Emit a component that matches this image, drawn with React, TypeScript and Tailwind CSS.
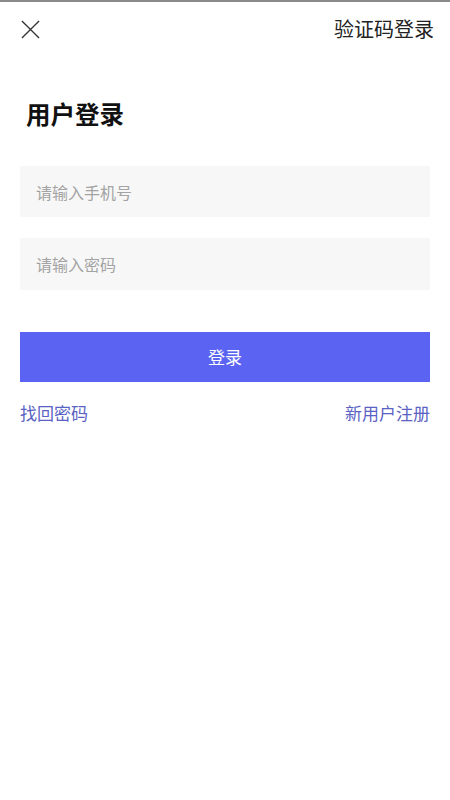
import { useState } from "react";

const font = { fontFamily: '"Noto Sans CJK SC", "Noto Sans", sans-serif' };

function CloseIcon() {
  return (
    <svg viewBox="0 0 20 20" className="h-[19px] w-[19px]" fill="none" stroke="#333" strokeWidth={1.4}>
      <path d="M1 1 L19 19 M19 1 L1 19" />
    </svg>
  );
}

export default function App() {
  const [phone, setPhone] = useState("");
  const [pwd, setPwd] = useState("");

  return (
    <div className="min-h-[800px] w-[450px] bg-white" style={font}>
      <div className="h-[2px] bg-[#8a8a8a]" />
      <header className="flex h-[54px] items-center justify-between pl-[21px] pr-[16px]">
        <button className="flex items-center">
          <CloseIcon />
        </button>
        <span className="text-[20px] text-[#222]">验证码登录</span>
      </header>

      <h1 className="mt-[41px] pl-[26px] text-[24.5px] font-bold leading-[34px] text-[#111]">用户登录</h1>

      <div className="mt-[35px] flex flex-col gap-[21px] px-[20px]">
        <input
          value={phone}
          onChange={(e) => setPhone(e.target.value)}
          placeholder="请输入手机号"
          className="h-[51px] w-full bg-[#f7f7f7] px-[16px] text-[16px] text-[#333] outline-none placeholder:text-[#a3a3a3]"
        />
        <input
          type="password"
          value={pwd}
          onChange={(e) => setPwd(e.target.value)}
          placeholder="请输入密码"
          className="h-[52px] w-full bg-[#f7f7f7] px-[16px] text-[16px] text-[#333] outline-none placeholder:text-[#a3a3a3]"
        />
      </div>

      <div className="mt-[42px] px-[20px]">
        <button className="flex h-[50px] w-full items-center justify-center bg-[#5b64f2] text-[17px] text-white">
          登录
        </button>
      </div>

      <div className="mt-[18px] flex items-center justify-between px-[20px] text-[17px] text-[#5a62c4]">
        <span>找回密码</span>
        <span>新用户注册</span>
      </div>
    </div>
  );
}
